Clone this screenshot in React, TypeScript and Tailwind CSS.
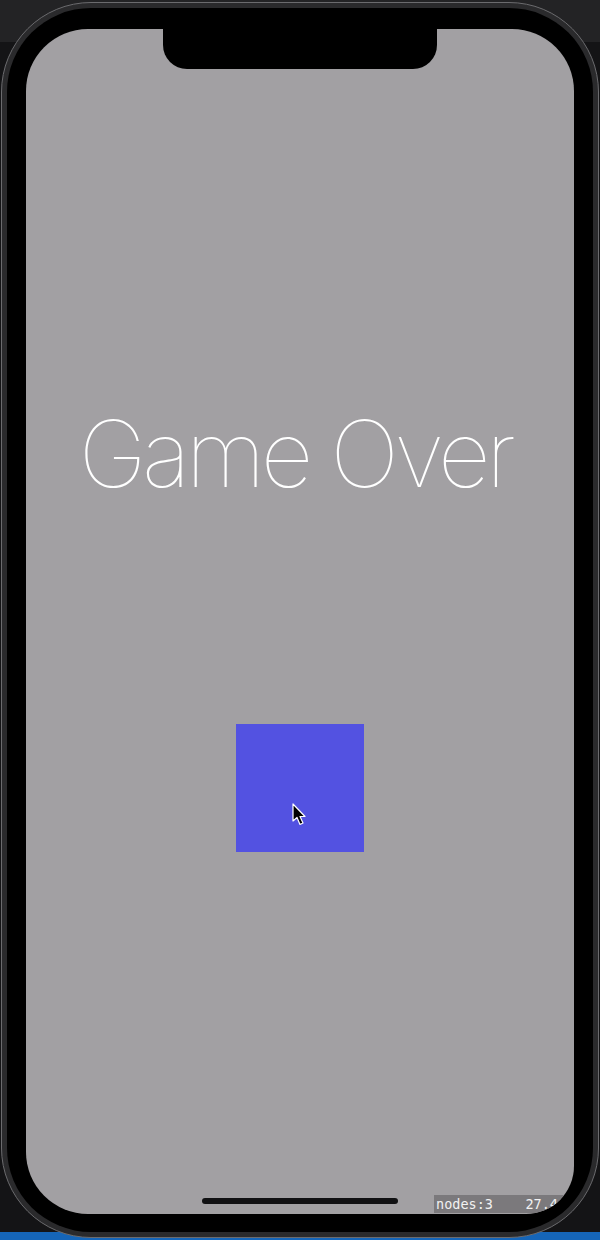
import React from 'react';

const Cursor: React.FC = () => (
    <svg width="16" height="24" viewBox="0 0 16 24" className="absolute left-[292px] top-[803px]">
        <path
            d="M1 1 L1 18 L5 14.5 L8 21.5 L11 20 L8 13.5 L13 13.5 Z"
            fill="#000"
            stroke="#fff"
            strokeWidth="1.2"
            strokeLinejoin="round"
        />
    </svg>
);

const App: React.FC = () => {
    return (
        <div className="relative w-[600px] h-[1240px] overflow-hidden bg-[linear-gradient(to_bottom,#232325_0px,#232325_42px,#141416_42px,#141416_1232px,#1565b8_1232px)]">
            {/* phone body */}
            <div className="ml-[1px] mt-[2px] w-[598px] h-[1236px] rounded-[90px] bg-[#2a2a2c] border border-[#6b6b6e] p-[5px]">
                <div className="w-full h-full rounded-[84px] bg-black px-[19px] pt-[21px] pb-[18px]">
                    {/* screen */}
                    <div className="relative w-full h-full rounded-[62px] rounded-br-[48px] bg-[#a2a0a3] overflow-hidden flex flex-col items-center">
                        {/* notch */}
                        <div className="absolute left-[137px] top-0 w-[274px] h-[40px] bg-black rounded-b-[24px]" />

                        <h1
                            className="mt-[379px] mr-[10px] text-white font-thin text-[92px] leading-none tracking-[-4.6px]"
                            style={{ fontFamily: '"Helvetica Neue", Inter, "Liberation Sans", sans-serif' }}
                        >
                            Game Over
                        </h1>

                        <div className="mt-[224px] w-[128px] h-[128px] bg-[#5352e1]" />

                        {/* home indicator */}
                        <div className="mt-auto mb-[10px] w-[196px] h-[6px] rounded-full bg-[#111113]" />

                        {/* debug stats */}
                        <div
                            className="absolute left-[408px] top-[1166px] h-[18px] pl-[2px] pr-[20px] bg-[#7b797c] text-[#f2f2f2] text-[13.5px] leading-[18px] whitespace-pre"
                            style={{ fontFamily: '"DejaVu Sans Mono", "Liberation Mono", monospace' }}
                        >
                            {'nodes:3    27.4 fps'}
                        </div>
                    </div>
                </div>
            </div>
            <Cursor />
        </div>
    );
};

export default App;
